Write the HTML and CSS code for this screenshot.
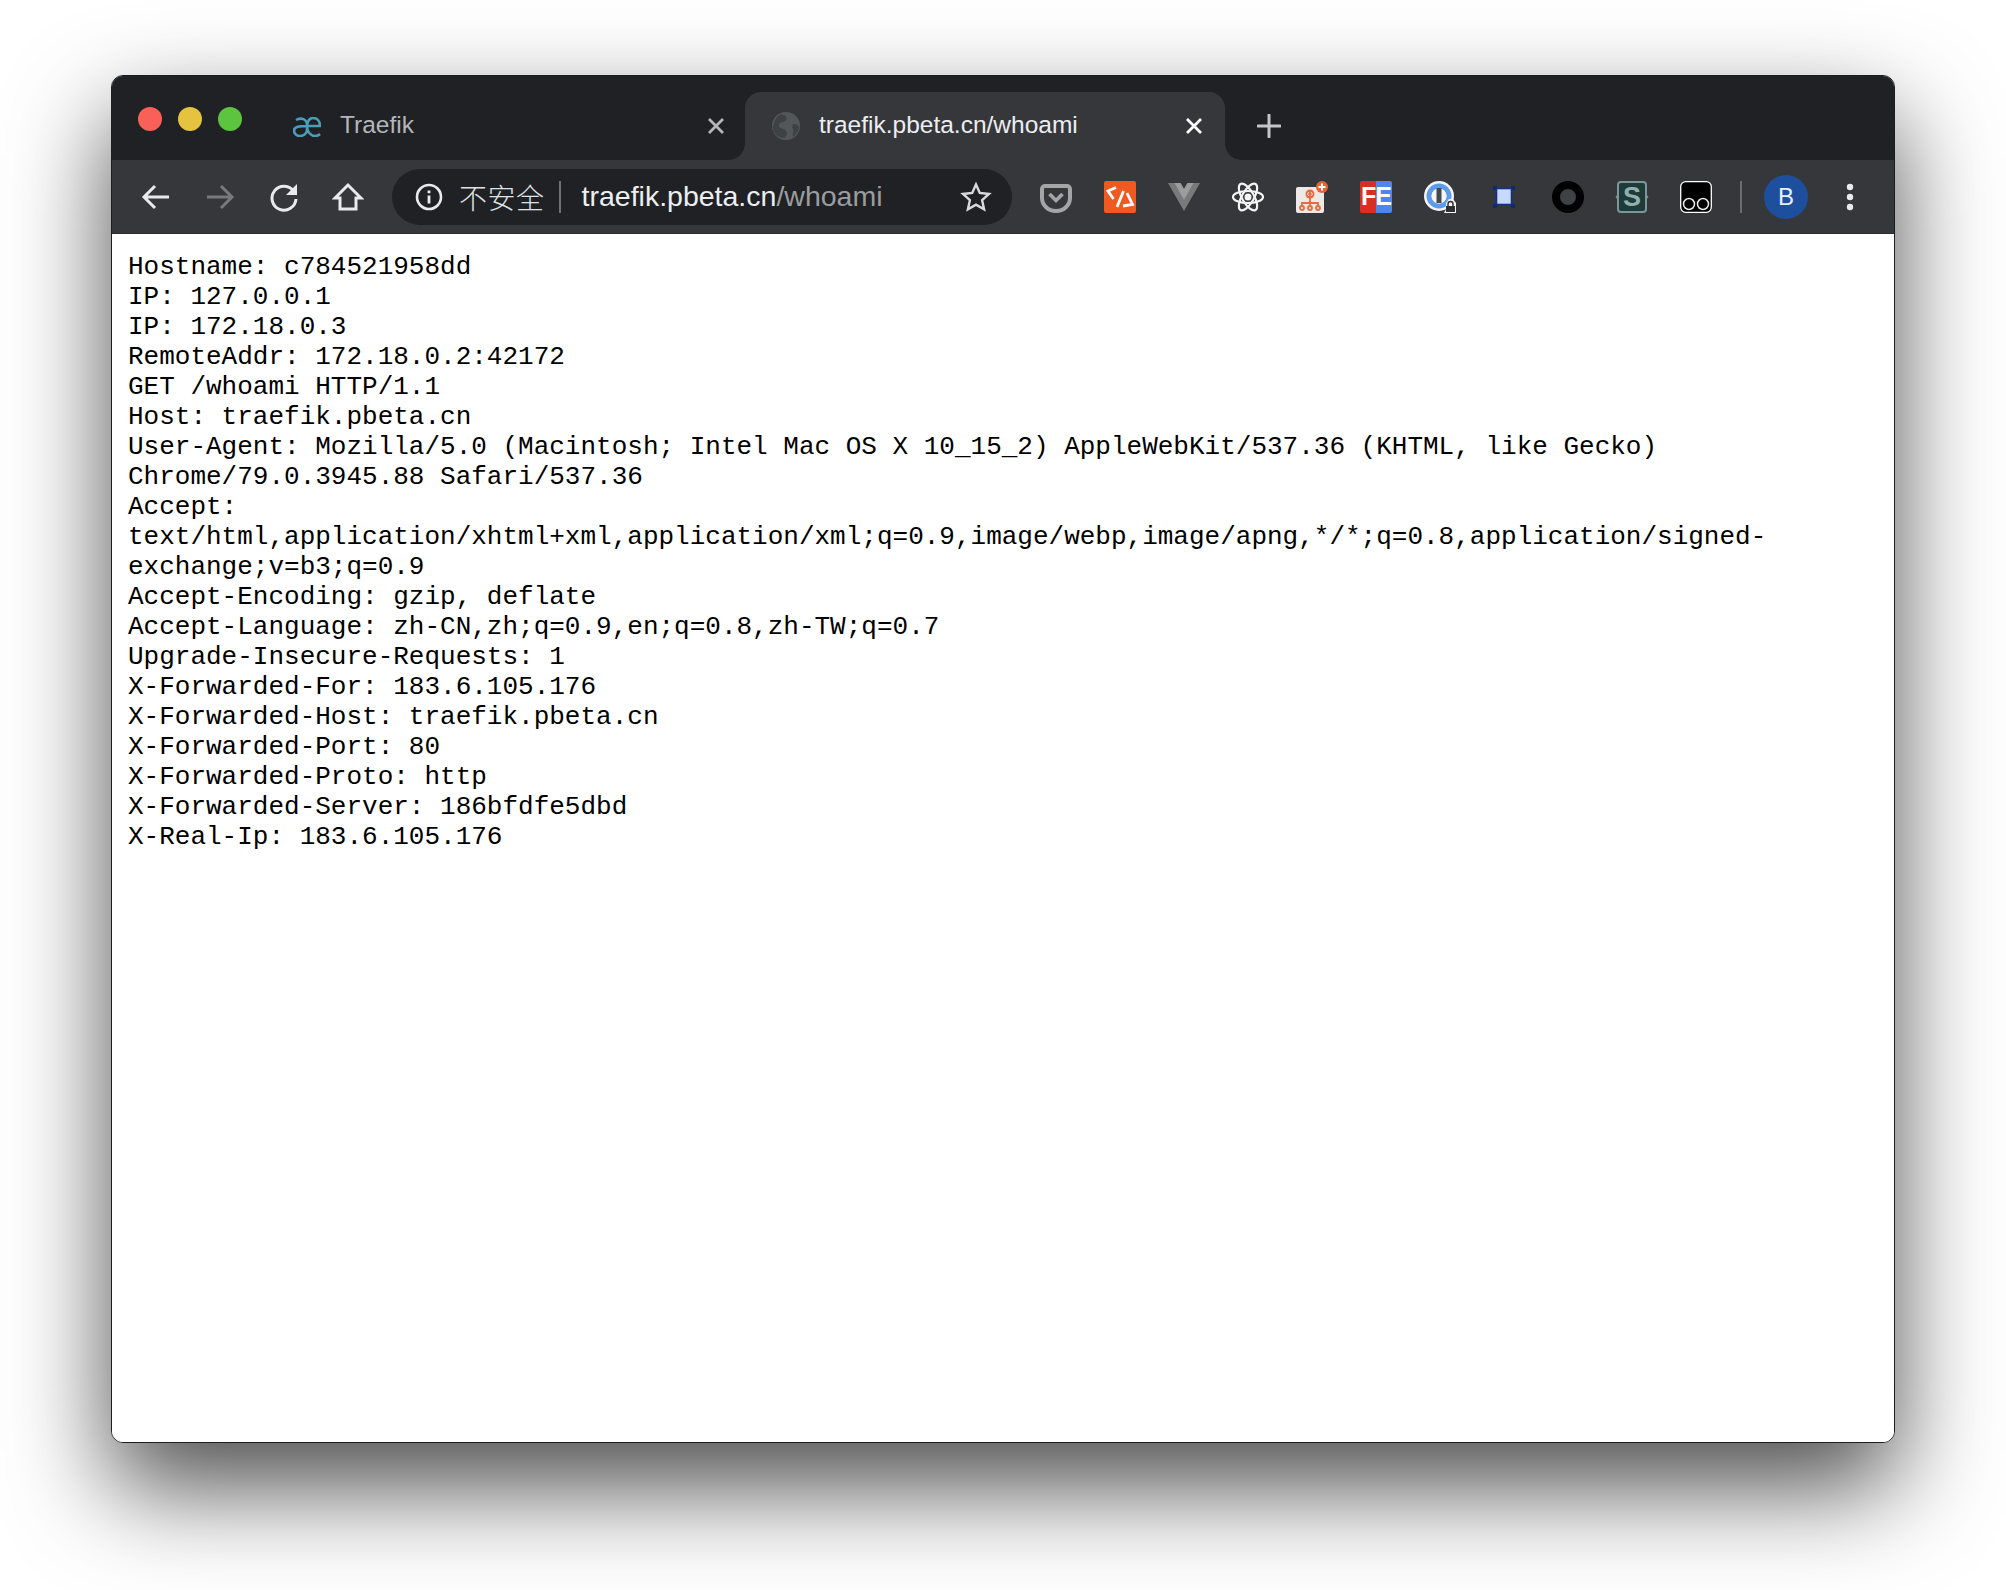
FILE: index.html
```html
<!DOCTYPE html>
<html lang="en">
<head>
<meta charset="utf-8">
<title>traefik.pbeta.cn/whoami</title>
<link rel="stylesheet" href="styles.css">
</head>
<body>
<div class="window">
  <div class="tabstrip">
    <div class="lights">
      <span class="light red"></span><span class="light yellow"></span><span class="light green"></span>
    </div>
    <div class="tab">
      <svg class="ae" viewBox="0 0 28 20"><path d="M3 3C8 0 14 2 14 8v5c0 4-4 6-7 6-3.500 0-6-2.500-6-5.500C1 10 5 9 14 9h13c0-5-3-8-7-8-3 0-6 3-6 8 0 6 4 10 8 10 2 0 4-1 5-2" fill="none" stroke="#4a9dbd" stroke-width="2.600"/></svg>
      <span class="tab-title">Traefik</span>
      <svg class="tab-close" viewBox="0 0 20 20"><path d="M3 3l14 14M17 3L3 17" stroke="#b4b6b9" stroke-width="2.800"/></svg>
    </div>
    <div class="tab active">
      <svg class="globe" viewBox="0 0 28 28"><circle cx="14" cy="14" r="14" fill="#54575a"/><path d="M9 2c4 1 7 3 5 6s-6 1-7 5 5 3 7 6 0 6-2 7c-5 0-9-3-11-8 0-8 3-14 8-16zM22 12c3 0 5 2 5 4-1 4-3 7-6 9-1-3 1-5 0-8s-1-5 1-5z" fill="#3f4245"/></svg>
      <span class="tab-title">traefik.pbeta.cn/whoami</span>
      <svg class="tab-close" viewBox="0 0 20 20"><path d="M3 3l14 14M17 3L3 17" stroke="#fff" stroke-width="2.800"/></svg>
    </div>
    <svg class="newtab" viewBox="0 0 24 24"><path d="M12 1v22M1 12h22" stroke="#c3c5c7" stroke-width="3" stroke-linecap="round"/></svg>
  </div>
  <div class="toolbar">
    <div class="slot"><svg class="nav" viewBox="0 0 32 32"><path d="M29 16H4M15 5L4 16l11 11" fill="none" stroke="#e8eaed" stroke-width="3"/></svg></div>
    <div class="slot"><svg class="nav" viewBox="0 0 32 32"><path d="M3 16h25M17 5l11 11-11 11" fill="none" stroke="#77797c" stroke-width="3"/></svg></div>
    <div class="slot"><svg class="nav" viewBox="0 0 32 32"><path d="M26 10.500A12 12 0 1 0 28 18" fill="none" stroke="#e8eaed" stroke-width="3"/><path d="M29 3v11H18z" fill="#e8eaed"/></svg></div>
    <div class="slot"><svg class="nav" viewBox="0 0 32 32"><path d="M16 4L3 17h5v11h16V17h5z" fill="none" stroke="#e8eaed" stroke-width="3"/></svg></div>
    <div class="omnibox">
      <svg class="info" viewBox="0 0 28 28"><circle cx="14" cy="14" r="12" fill="none" stroke="#e8eaed" stroke-width="2.600"/><path d="M12.600 12.500h2.800v8h-2.800zM12.600 7.500h2.800v2.800h-2.800z" fill="#e8eaed"/></svg>
      <span class="insecure">不安全</span>
      <span class="omni-sep"></span>
      <span class="url">traefik.pbeta.cn<span class="url-path">/whoami</span></span>
      <svg class="star" viewBox="0 0 32 32"><path d="M16 3.500l3.800 8.500 9.200 1-6.900 6.200 2 9.100L16 23.600l-8.100 4.700 2-9.100L3 13l9.200-1z" fill="none" stroke="#d8dadd" stroke-width="2.400"/></svg>
    </div>
    <div class="extensions">
      <div class="slot"><svg class="ext" viewBox="0 0 32 32"><path d="M5 5h22a3 3 0 0 1 3 3v9a14 13 0 0 1-28 0V8a3 3 0 0 1 3-3z" fill="none" stroke="#a3a5a7" stroke-width="4"/><path d="M9.500 13l6.500 6.500 6.500-6.500" fill="none" stroke="#a3a5a7" stroke-width="3.600"/></svg></div>
      <div class="slot"><svg class="ext" viewBox="0 0 32 32"><rect width="32" height="32" rx="2" fill="#f0591f"/><path d="M12 6.500L4 10l5.500 8M19.500 10L13 26M23 12l5.500 11.500L19 25" fill="none" stroke="#fff" stroke-width="2.800"/></svg></div>
      <div class="slot"><svg class="ext" viewBox="0 0 32 32"><path d="M0 2h12.500L16 8l3.500-6H32L16 30z" fill="#77797b"/><path d="M6.500 2h6L16 8l3.500-6h6L16 19z" fill="#9a9c9e"/></svg></div>
      <div class="slot"><svg class="ext" viewBox="0 0 32 32"><g fill="none" stroke="#f4f4f4" stroke-width="2.200"><ellipse cx="16" cy="16" rx="15" ry="6"/><ellipse cx="16" cy="16" rx="15" ry="6" transform="rotate(60 16 16)"/><ellipse cx="16" cy="16" rx="15" ry="6" transform="rotate(120 16 16)"/></g><circle cx="16" cy="16" r="3.500" fill="#f4f4f4"/></svg></div>
      <div class="slot"><svg class="ext" viewBox="0 0 32 32"><rect y="6" width="28" height="26" rx="2" fill="#ece9e6"/><g fill="none" stroke="#ea6a3d" stroke-width="1.800"><path d="M14 17v9M6 25v-3h16v3"/><circle cx="6" cy="27" r="2"/><circle cx="14" cy="27" r="2"/><circle cx="22" cy="27" r="2"/></g><circle cx="14" cy="13" r="4.500" fill="#ea6a3d"/><path d="M13 11l-1.500 2 1.500 2M15 11l1.500 2-1.500 2" fill="none" stroke="#fff" stroke-width=".8"/><circle cx="26" cy="6" r="6" fill="#e9622f"/><path d="M26 2.500v7M22.500 6h7" stroke="#fff" stroke-width="2"/></svg></div>
      <div class="slot"><div class="fe"><span class="fe-text">FE</span></div></div>
      <div class="slot"><svg class="ext" viewBox="0 0 32 32"><circle cx="15" cy="15" r="15" fill="#f5f5f5"/><circle cx="15" cy="15" r="10" fill="none" stroke="#5d9cec" stroke-width="5"/><circle cx="15" cy="15" r="7.500" fill="#f5f5f5"/><rect x="12.500" y="7" width="5" height="15" fill="#46494c"/><path d="M20 32l2-4v-6l3-4h4l3 4v10z" fill="#f5f5f5"/><path d="M24 26v-3a2.500 2.500 0 0 1 5 0v3" fill="none" stroke="#2e3033" stroke-width="1.500"/><rect x="22" y="25" width="9" height="6" fill="#2e3033"/></svg></div>
      <div class="slot"><svg class="ext" viewBox="0 0 32 32"><g fill="#15276e"><rect x="5" y="5" width="4" height="4"/><rect x="23" y="5" width="4" height="4"/><rect x="5" y="23" width="4" height="4"/><rect x="23" y="23" width="4" height="4"/></g><rect x="8.500" y="7.500" width="15" height="16" fill="#c5dafa" stroke="#12308c" stroke-width="1.600"/></svg></div>
      <div class="slot"><svg class="ext" viewBox="0 0 32 32"><circle cx="16" cy="16" r="12" fill="#3f4144" stroke="#000" stroke-width="8"/></svg></div>
      <div class="slot"><svg class="ext" viewBox="0 0 32 32"><rect x="2" y="1" width="28" height="30" rx="3" fill="#1f3b39" stroke="#7a9895" stroke-width="2"/><path d="M2 14l-1.500 2L2 18M30 14l1.500 2L30 18" fill="none" stroke="#7a9895" stroke-width="1.500"/><text class="s-letter" x="16" y="25" text-anchor="middle">S</text></svg></div>
      <div class="slot"><svg class="ext" viewBox="0 0 32 32"><rect x=".7" y=".7" width="30.600" height="30.600" rx="5" fill="#000" stroke="#fff" stroke-width="1.300"/><circle cx="9" cy="23" r="5.500" fill="none" stroke="#e8e8e8" stroke-width="1.500"/><circle cx="23" cy="23" r="5.500" fill="none" stroke="#e8e8e8" stroke-width="1.500"/></svg></div>
    </div>
    <span class="tool-sep"></span>
    <span class="avatar">B</span>
    <svg class="menu" viewBox="0 0 8 28"><circle cx="4" cy="4" r="3.200" fill="#e8eaed"/><circle cx="4" cy="14" r="3.200" fill="#e8eaed"/><circle cx="4" cy="24" r="3.200" fill="#e8eaed"/></svg>
  </div>
  <pre class="content">Hostname: c784521958dd
IP: 127.0.0.1
IP: 172.18.0.3
RemoteAddr: 172.18.0.2:42172
GET /whoami HTTP/1.1
Host: traefik.pbeta.cn
User-Agent: Mozilla/5.0 (Macintosh; Intel Mac OS X 10_15_2) AppleWebKit/537.36 (KHTML, like Gecko)
Chrome/79.0.3945.88 Safari/537.36
Accept:
text/html,application/xhtml+xml,application/xml;q=0.9,image/webp,image/apng,*/*;q=0.8,application/signed-
exchange;v=b3;q=0.9
Accept-Encoding: gzip, deflate
Accept-Language: zh-CN,zh;q=0.9,en;q=0.8,zh-TW;q=0.7
Upgrade-Insecure-Requests: 1
X-Forwarded-For: 183.6.105.176
X-Forwarded-Host: traefik.pbeta.cn
X-Forwarded-Port: 80
X-Forwarded-Proto: http
X-Forwarded-Server: 186bfdfe5dbd
X-Real-Ip: 183.6.105.176</pre>
</div>
</body>
</html>
```

FILE: styles.css
```css
html, body { margin: 0; height: 100%; background: #fff; }
body { padding: 75px 111px 0; box-sizing: border-box; overflow: hidden; }
.window {
  width: 1784px; height: 1368px; box-sizing: border-box;
  display: flex; flex-direction: column;
  border: 1px solid #1d1d1f; border-radius: 12px; overflow: hidden; background: #fff;
  box-shadow: 0 44px 100px rgba(0,0,0,.7);
}
.tabstrip {
  height: 84px; flex: none; display: flex; align-items: flex-start;
  background: #202124; font-family: "Liberation Sans", Arial, sans-serif;
  padding-top: 16px; box-sizing: border-box;
}
.lights { display: flex; gap: 16px; width: 127px; padding: 15px 0 0 26px; box-sizing: content-box; flex: none; }
.light { width: 24px; height: 24px; border-radius: 50%; }
.red { background: #f96057; } .yellow { background: #e5c33e; } .green { background: #5cc43f; }
.tab {
  width: 480px; height: 68px; flex: none; display: flex; align-items: center; position: relative;
  box-sizing: border-box; padding: 0 19px 0 28px; color: #b4b6b9; font-size: 24.500px;
}
.tab.active { background: #36373b; color: #eceef0; border-radius: 16px 16px 0 0; padding: 0 21px 0 27px; }
.tab.active::before, .tab.active::after { content: ""; position: absolute; bottom: 0; width: 16px; height: 16px; }
.tab.active::before { left: -16px; background: radial-gradient(circle at 0 0, transparent 15.500px, #36373b 16px); }
.tab.active::after { right: -16px; background: radial-gradient(circle at 100% 0, transparent 15.500px, #36373b 16px); }
.ae { width: 28px; height: 20px; margin-right: 19px; flex: none; position: relative; top: 1px; }
.globe { width: 28px; height: 28px; margin-right: 19px; flex: none; }
.tab-title { flex: 1; white-space: nowrap; position: relative; top: -1px; }
.tab-close { width: 20px; height: 20px; flex: none; }
.newtab { width: 24px; height: 24px; margin: 22px 0 0 32px; }
.toolbar {
  height: 74px; flex: none; display: flex; align-items: center;
  background: #36373b; border-bottom: 1px solid #2b2c2f; box-sizing: border-box; padding: 0 0 0 12px;
  font-family: "Liberation Sans", Arial, sans-serif;
}
.slot { width: 64px; flex: none; display: flex; justify-content: center; align-items: center; }
.nav { width: 32px; height: 32px; }
.omnibox {
  width: 620px; height: 56px; margin-left: 12px; flex: none; display: flex; align-items: center;
  background: #202124; border-radius: 28px; box-sizing: border-box; padding: 0 20px 0 23px;
}
.info { width: 28px; height: 28px; flex: none; }
.insecure { font-family: "Noto Sans CJK SC", sans-serif; font-weight: 300; color: #dfe1e4; font-size: 28px; margin-left: 16px; letter-spacing: .5px; line-height: 1; white-space: nowrap; }
.omni-sep { width: 2px; height: 32px; background: #6f7174; margin: 0 21px 0 14px; flex: none; }
.url { flex: 1; color: #eceef0; font-size: 28.500px; white-space: nowrap; }
.url-path { color: #9a9da0; }
.star { width: 32px; height: 32px; flex: none; }
.extensions { display: flex; margin-left: 12px; }
.ext { width: 32px; height: 32px; display: block; overflow: visible; }
.fe {
  width: 32px; height: 32px; border-radius: 2px; display: flex; align-items: center; justify-content: center;
  background: linear-gradient(90deg, #d92f22 0 50%, #4f86ec 50% 100%);
}
.fe-text { color: #fff; font-weight: 700; font-size: 25px; line-height: 1; letter-spacing: -1px; }
.s-letter { font-family: "Liberation Sans", sans-serif; font-weight: 700; font-size: 27px; fill: #8fb0ac; }
.tool-sep { width: 2px; height: 32px; background: #6a6c6f; margin-left: 12px; flex: none; }
.avatar {
  width: 44px; height: 44px; border-radius: 50%; background: #1d4f9e; color: #e8eefb; flex: none;
  display: flex; align-items: center; justify-content: center; font-size: 24px; margin-left: 22px;
}
.menu { width: 8px; height: 28px; margin-left: 38px; flex: none; }
.content {
  flex: 1; margin: 0; padding: 18px 16px 0; background: #fff; color: #000;
  font-family: "Liberation Mono", "Courier New", monospace; font-size: 26px; line-height: 30px;
}
```
